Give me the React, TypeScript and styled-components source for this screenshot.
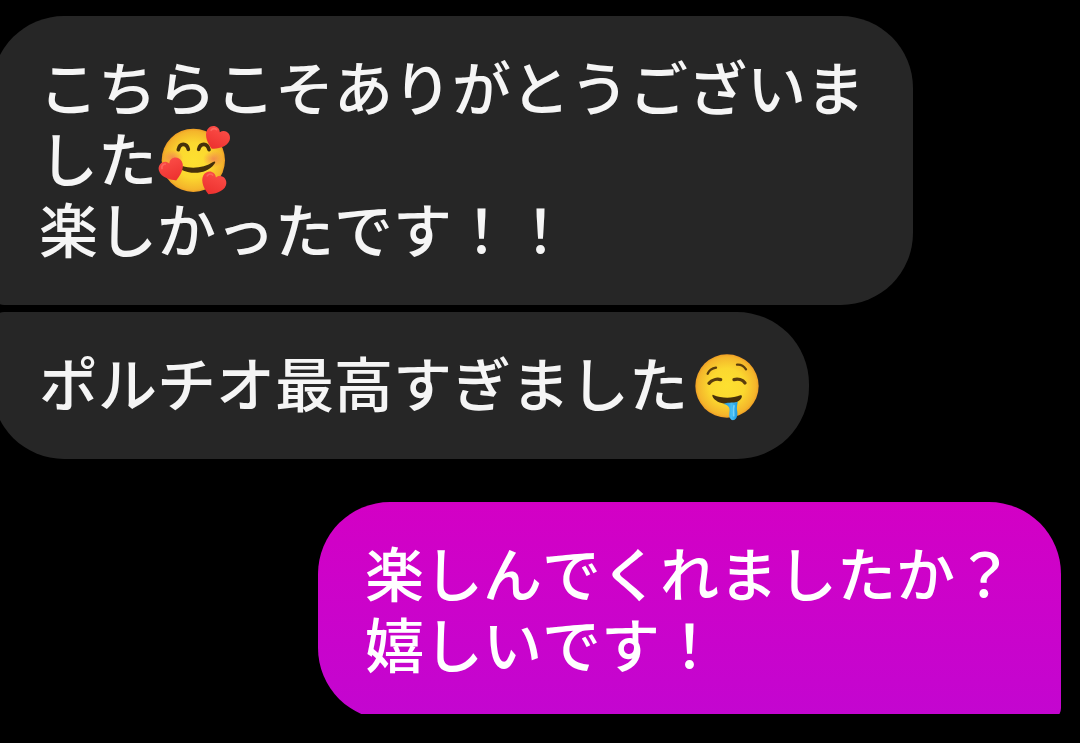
import React from 'react';
import styled, { createGlobalStyle } from 'styled-components';

const GlobalStyle = createGlobalStyle`
  body {
    margin: 0;
    background: #000;
  }
`;

const Screen = styled.main`
  display: flex;
  flex-direction: column;
  height: 100vh;
  overflow: hidden;
  background: #000;
  font-family: 'Noto Sans CJK JP', 'Noto Sans', sans-serif;
`;

const Thread = styled.section`
  flex: 1;
  min-height: 0;
  overflow: hidden;
  padding-top: 16px;
`;

const BottomBar = styled.footer`
  flex: none;
  height: 29px;
  background: #000;
`;

const Group = styled.div<{ $own?: boolean }>`
  display: flex;
  flex-direction: column;
  align-items: ${({ $own }) => ($own ? 'flex-end' : 'flex-start')};
  gap: 7px;
  margin: ${({ $own }) => ($own ? '43px 19px 0 0' : '0 0 0 -8px')};
`;

type Position = 'first' | 'last';

const corners = (own: boolean, position: Position) => {
  if (own) return position === 'first' ? '72px 72px 12px 72px' : '72px 12px 72px 72px';
  return position === 'first' ? '72px 72px 72px 12px' : '12px 72px 72px 72px';
};

const Bubble = styled.p<{ $own?: boolean; $position: Position }>`
  box-sizing: border-box;
  max-width: 921px;
  margin: 0;
  padding: 34px 47px 42px;
  border-radius: ${({ $own, $position }) => corners(Boolean($own), $position)};
  background: ${({ $own }) => ($own ? 'linear-gradient(#d300c5, #c306d0)' : '#262626')};
  color: ${({ $own }) => ($own ? '#fff' : '#f5f5f5')};
  font-size: 59px;
  font-weight: 500;
  font-kerning: none;
  line-height: 71px;
  white-space: pre-line;
  line-break: anywhere;
`;

const Emoji = styled.svg`
  width: 74px;
  height: 71px;
  vertical-align: top;
  overflow: visible;
`;

const Heart = ({ transform }: { transform: string }) => (
  <g transform={transform}>
    <path
      d="M0 36C-14 29-39 12-37-10C-35-31-9-37 0-19C9-37 35-31 37-10C39 12 14 29 0 36Z"
      fill="url(#heart)"
    />
    <path d="M-26-13C-25-21-18-24-12-22" fill="none" stroke="#ff7a70" strokeWidth="5" strokeLinecap="round" opacity=".6" />
  </g>
);

const HeartsFace = () => (
  <Emoji viewBox="50 18 222 213" role="img" aria-label="🥰">
    <defs>
      <radialGradient id="face" cx=".5" cy=".5" r=".5">
        <stop offset="0" stopColor="#fde030" />
        <stop offset=".55" stopColor="#fbd82f" />
        <stop offset=".92" stopColor="#f4b52b" />
        <stop offset="1" stopColor="#ee9e25" />
      </radialGradient>
      <radialGradient id="blush">
        <stop offset="0" stopColor="#f27a55" stopOpacity=".75" />
        <stop offset="1" stopColor="#f27a55" stopOpacity="0" />
      </radialGradient>
      <linearGradient id="heart" x1="0" y1="0" x2="0" y2="1">
        <stop offset="0" stopColor="#fa4b45" />
        <stop offset="1" stopColor="#ec302e" />
      </linearGradient>
    </defs>
    <circle cx="159" cy="136" r="95" fill="url(#face)" />
    <ellipse cx="97" cy="128" rx="32" ry="24" fill="url(#blush)" />
    <ellipse cx="220" cy="132" rx="32" ry="25" fill="url(#blush)" />
    <g fill="none" stroke="#45300b" strokeWidth="11" strokeLinecap="round">
      <path d="M114 104C118 83 139 83 144 103" />
      <path d="M175 103C180 83 201 83 206 104" />
    </g>
    <path d="M126 153C156 163 193 158 218 141C225 137 227 141 222 147C199 179 151 178 123 164Z" fill="#45300b" />
    <Heart transform="translate(230 69) rotate(26)" />
    <Heart transform="translate(94 163) rotate(-22)" />
    <Heart transform="translate(219 205) rotate(24)" />
  </Emoji>
);

const DroolFace = () => (
  <Emoji viewBox="25 16 222 213" role="img" aria-label="🤤">
    <defs>
      <linearGradient id="drool" x1="0" y1="0" x2="1" y2="0">
        <stop offset="0" stopColor="#168bd0" />
        <stop offset=".55" stopColor="#45bdf5" />
        <stop offset="1" stopColor="#1c98de" />
      </linearGradient>
    </defs>
    <circle cx="142" cy="136" r="95" fill="url(#face)" />
    <g fill="none" stroke="#5a3d0c" strokeLinecap="round">
      <path d="M84 99C88 90 97 83 109 81" strokeWidth="7" />
      <path d="M172 72C182 71 193 77 199 86" strokeWidth="7" />
      <path d="M88 128C97 117 112 114 123 117" strokeWidth="10" />
      <path d="M163 117C175 114 189 117 196 127" strokeWidth="10" />
    </g>
    <path d="M101 163C126 174 158 174 182 164C188 162 188 168 184 174C167 196 119 195 101 172C97 167 97 161 101 163Z" fill="#45300b" />
    <path d="M132 190C140 184 158 187 174 183C173 193 170 201 173 214C176 246 145 246 149 218C151 205 151 194 132 190Z" fill="url(#drool)" />
    <path d="M163 195C160 204 162 214 162 225" fill="none" stroke="#72d2fa" strokeWidth="5" strokeLinecap="round" />
  </Emoji>
);

export default function App() {
  return (
    <>
      <GlobalStyle />
      <Screen lang="ja">
        <Thread>
          <Group>
            <Bubble $position="first">
              こちらこそありがとうございました
              <HeartsFace />
              {'\n'}
              楽しかったです！！
            </Bubble>
            <Bubble $position="last">
              ポルチオ最高すぎました
              <DroolFace />
            </Bubble>
          </Group>
          <Group $own>
            <Bubble $own $position="first">
              {'楽しんでくれましたか？\n嬉しいです！'}
            </Bubble>
          </Group>
        </Thread>
        <BottomBar />
      </Screen>
    </>
  );
}
